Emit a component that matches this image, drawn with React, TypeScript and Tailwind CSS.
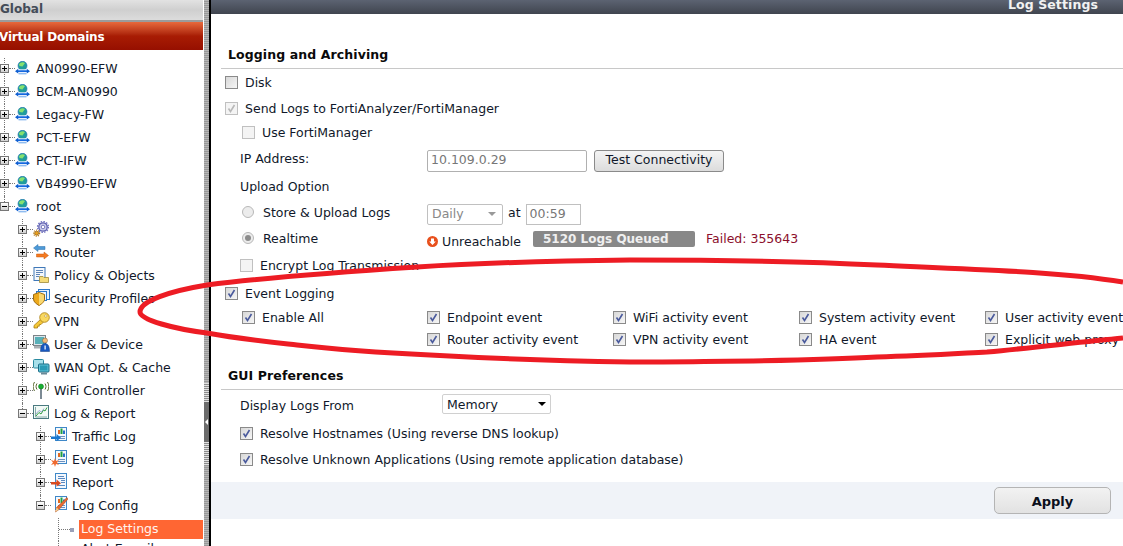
import type { ReactNode } from 'react'

function VdomIcon() {
  return (
    <svg width="15" height="14" viewBox="0 0 15 14">
      <circle cx="7.500" cy="4.800" r="4.500" fill="#1f9c9c" stroke="#1b6fb0" strokeWidth=".6" />
      <path d="M4 3.200C5 1 8.500.6 10 2L7.500 5.500 4.500 5z" fill="#86e070" />
      <rect x="3" y="8.300" width="9" height="1.400" fill="#e8f4ff" />
      <rect x="3" y="9.300" width="9" height="1.800" fill="#1467e0" />
      <path d="M0 10.200 3.200 7.800v4.800zM15 10.200 11.800 7.800v4.800z" fill="#0f5fd0" />
      <rect x="3.500" y="12" width="8" height="1.400" fill="#8fbcf0" />
    </svg>
  )
}

function GearIcon() {
  return (
    <svg width="16" height="16" viewBox="0 0 16 16">
      <circle cx="10" cy="6" r="4.200" fill="#cfd0ee" stroke="#5d5fae" strokeWidth="1.300" />
      <circle cx="10" cy="6" r="5.400" fill="none" stroke="#6d6fc0" strokeWidth="1.400" strokeDasharray="1.500 1.300" />
      <circle cx="10" cy="6" r="1.800" fill="#fff" stroke="#5d5fae" strokeWidth=".8" />
      <circle cx="3.600" cy="12.200" r="2" fill="#e8a020" stroke="#8a5a10" strokeWidth=".7" />
      <circle cx="3.600" cy="12.200" r="3" fill="none" stroke="#b87a15" strokeWidth="1.200" strokeDasharray="1.100 1.100" />
    </svg>
  )
}

function RouterIcon() {
  return (
    <svg width="16" height="16" viewBox="0 0 16 16">
      <path d="M0.500 4 5 .5V2.500H12V5.500H5V7.500z" fill="#4d9ad8" stroke="#2a6ea8" strokeWidth=".5" />
      <path d="M15.500 11.500 11 8V10H3.500V13H11V15z" fill="#f47a20" stroke="#c85a10" strokeWidth=".5" />
    </svg>
  )
}

function PolicyIcon() {
  return (
    <svg width="16" height="16" viewBox="0 0 16 16">
      <rect x="1" y="0.500" width="11" height="13" fill="#f4f8fd" stroke="#3f78b8" />
      <path d="M3 3.500H10M3 5.500H10M3 7.500H7M3 9.500H6" stroke="#5f86b8" />
      <path d="M6.500 9.500H10L11 10.500H15.500V15.500H6.500z" fill="#f5dc78" stroke="#a08a3a" strokeWidth=".8" />
    </svg>
  )
}

function ShieldIcon() {
  return (
    <svg width="17" height="17" viewBox="0 0 17 17">
      <rect x="5.500" y="0.500" width="11" height="10" fill="#e6f0fb" stroke="#2c78c8" />
      <rect x="3.500" y="2.500" width="10" height="9" fill="#eef5fc" stroke="#2c78c8" />
      <path d="M0.500 5.500 6 3.500 11.500 5.500V10C11.500 13 8.500 15 6 16.500 3.500 15 .5 13 .5 10z" fill="#eda91c" stroke="#9c6a10" />
      <path d="M6 4V16C8.500 14.500 11 13 11 10V6z" fill="#f9d870" />
    </svg>
  )
}

function KeyIcon() {
  return (
    <svg width="17" height="17" viewBox="0 0 17 17">
      <path d="M8 7 1 13.500V16H4.500V14.200H6.300V12.500H8L10 10.500z" fill="#f5c838" stroke="#a87c12" strokeWidth=".8" />
      <circle cx="11.500" cy="5.500" r="4.800" fill="#f9d860" stroke="#a87c12" strokeWidth=".8" />
      <circle cx="12.800" cy="4" r="1.200" fill="#fff" stroke="#a87c12" strokeWidth=".5" />
    </svg>
  )
}

function UserIcon() {
  return (
    <svg width="17" height="17" viewBox="0 0 17 17">
      <rect x="0.500" y="0.500" width="12" height="10" fill="#dce6ec" stroke="#7c8488" />
      <rect x="2" y="2" width="9" height="7" fill="#58b0b8" />
      <rect x="1" y="11" width="10" height="2.500" fill="#a8aeb2" />
      <circle cx="12" cy="5.500" r="2.500" fill="#f0b878" stroke="#7a5a30" strokeWidth=".5" />
      <path d="M7.500 16.500C7.500 10.500 9.500 8.500 12 8.500S16.500 10.500 16.500 16.500z" fill="#1858c0" stroke="#0c3880" strokeWidth=".5" />
      <rect x="11.500" y="10.500" width="1.200" height="4" fill="#fff" />
    </svg>
  )
}

function WanIcon() {
  return (
    <svg width="17" height="16" viewBox="0 0 17 16">
      <rect x="0.500" y="0.500" width="10" height="8.500" rx="1" fill="#a8e0ea" stroke="#2a8aa0" />
      <rect x="5.500" y="5" width="10.500" height="8" rx="1" fill="#60c4d8" stroke="#1a6a84" />
      <rect x="7" y="6.500" width="7.500" height="5" fill="#2a9ab4" />
      <rect x="8" y="13.500" width="6" height="2" fill="#6a8a98" />
    </svg>
  )
}

function WifiIcon() {
  return (
    <svg width="16" height="18" viewBox="0 0 16 18" fill="none">
      <rect x="7" y="7" width="2" height="11" fill="#7c8a94" />
      <circle cx="8" cy="5.500" r="2.500" fill="#18b030" stroke="#0a7018" strokeWidth=".5" />
      <path d="M4 2.500C2.700 4.500 2.700 6.500 4 8.500M12 2.500C13.300 4.500 13.300 6.500 12 8.500M1.500 1C-.3 4-.3 7 1.500 10M14.500 1C16.300 4 16.300 7 14.500 10" stroke="#5a6a30" />
    </svg>
  )
}

function ChartIcon() {
  return (
    <svg width="16" height="15" viewBox="0 0 16 15" fill="none">
      <rect x="0.500" y="0.500" width="15" height="13" fill="#f2faf6" stroke="#4a7a80" />
      <path d="M2.500 2V12H14" stroke="#8aa" />
      <path d="M3 11 6 7.500 8 9 10.500 5 12 6 14 2.500" stroke="#30a040" />
      <path d="M3 9 6 5.500 8.500 7 11 3.500" stroke="#7a8ac0" strokeWidth=".7" />
    </svg>
  )
}

function DocBars({ children }: { children: ReactNode }) {
  return (
    <svg width="17" height="17" viewBox="0 0 17 17">
      <rect x="4.500" y="0.500" width="11" height="13" fill="#f4f8fd" stroke="#3f88c8" />
      <rect x="7" y="3" width="2" height="4" fill="#e06a20" />
      <rect x="9.500" y="1.500" width="2" height="5.500" fill="#20a040" />
      <rect x="12" y="3.500" width="2" height="3.500" fill="#2a70c8" />
      <path d="M7 9.500H14M7 11.500H14" stroke="#6a90c0" />
      {children}
    </svg>
  )
}

function TrafficIcon() {
  return (
    <DocBars>
      <path d="M0 9.500H5.500V7L10 10.700 5.500 14.300V12H0z" fill="#1a78d0" />
    </DocBars>
  )
}

function EventIcon() {
  return (
    <DocBars>
      <path d="M4 8 5 11 8 10 6 12.500 8 15 5 14 4 17 3 14 0 15 2 12.500 0 10 3 11z" fill="#f06a30" />
    </DocBars>
  )
}

function ReportIcon() {
  return (
    <svg width="17" height="17" viewBox="0 0 17 17">
      <rect x="4.500" y="0.500" width="11" height="15" fill="#f4f8fd" stroke="#3f88c8" />
      <path d="M7 3.500H13M7 5.500H14M10 7.500H14M10 9.500H14M7 12.500H14" stroke="#5a88c0" />
      <path d="M0 9H5.500V6.500L10 10.200 5.500 13.800V11.500H0z" fill="#d84a20" />
    </svg>
  )
}

function ConfigIcon() {
  return (
    <DocBars>
      <path d="M16 1.500 17 3 8 13.500 4.500 16 5.500 11.500z" fill="#e86a30" stroke="#a04018" strokeWidth=".5" />
      <path d="M5.500 11.500 7.800 13.500 4.500 16z" fill="#f0d090" />
    </DocBars>
  )
}

type Node = {
  label: string
  depth: number
  icon: ReactNode
  open?: boolean
  // last child of its parent: the guide line stops at this row
  last?: boolean
}

const vdoms = ['AN0990-EFW', 'BCM-AN0990', 'Legacy-FW', 'PCT-EFW', 'PCT-IFW', 'VB4990-EFW']

const tree: Node[] = [
  ...vdoms.map((label) => ({ label, depth: 0, icon: <VdomIcon /> })),
  { label: 'root', depth: 0, icon: <VdomIcon />, open: true, last: true },
  { label: 'System', depth: 1, icon: <GearIcon /> },
  { label: 'Router', depth: 1, icon: <RouterIcon /> },
  { label: 'Policy & Objects', depth: 1, icon: <PolicyIcon /> },
  { label: 'Security Profiles', depth: 1, icon: <ShieldIcon /> },
  { label: 'VPN', depth: 1, icon: <KeyIcon /> },
  { label: 'User & Device', depth: 1, icon: <UserIcon /> },
  { label: 'WAN Opt. & Cache', depth: 1, icon: <WanIcon /> },
  { label: 'WiFi Controller', depth: 1, icon: <WifiIcon /> },
  { label: 'Log & Report', depth: 1, icon: <ChartIcon />, open: true, last: true },
  { label: 'Traffic Log', depth: 2, icon: <TrafficIcon /> },
  { label: 'Event Log', depth: 2, icon: <EventIcon /> },
  { label: 'Report', depth: 2, icon: <ReportIcon /> },
  { label: 'Log Config', depth: 2, icon: <ConfigIcon />, open: true, last: true },
]

function Expander({ open, last }: { open?: boolean; last?: boolean }) {
  return (
    <div className="relative w-[15px] self-stretch shrink-0">
      <span className={`absolute left-[4px] top-0 border-l border-dotted border-[#777] ${last ? 'h-[10px]' : 'bottom-0'}`} />
      <span className="absolute left-[9px] top-[10px] w-[6px] border-t border-dotted border-[#777]" />
      <span className="absolute left-0 top-[6px] w-[9px] h-[9px] border border-[#777] bg-gradient-to-b from-white to-[#d0d0d0]">
        <span className="absolute left-[1px] top-[3px] w-[5px] h-px bg-black" />
        {!open && <span className="absolute left-[3px] top-[1px] w-px h-[5px] bg-black" />}
      </span>
    </div>
  )
}

function TreeRow({ node }: { node: Node }) {
  return (
    <div className="h-[23px] flex items-center">
      {Array.from({ length: node.depth }).map((_, i) => (
        <div key={i} className="w-[18px] shrink-0" />
      ))}
      <Expander open={node.open} last={node.last} />
      <div className="w-[21px] shrink-0 -mt-[4px] flex">{node.icon}</div>
      <span className="whitespace-nowrap text-[#10182a]">{node.label}</span>
    </div>
  )
}

function Sidebar() {
  return (
    <div className="w-[204px] shrink-0 h-full overflow-hidden bg-white pr-px text-[12.5px]">
      <div className="h-[22px] overflow-hidden bg-gradient-to-b from-[#e2e2e2] via-[#cfcfcf] to-[#dcdcdc] border-b-2 border-[#9c9c9c]">
        <div className="text-[12px] font-bold text-[#444c58] leading-[18px]">Global</div>
      </div>
      <div className="h-[28px] pt-[2px] flex items-center bg-gradient-to-b from-[#e8693c] via-[#a81c04] to-[#960f00]">
        <span className="-ml-px text-[12px] tracking-[-0.2px] font-bold text-white">Virtual Domains</span>
      </div>
      <div className="pt-[8px]">
        {tree.map((node) => (
          <TreeRow key={node.label} node={node} />
        ))}
        <div className="h-[23px] pl-[58px] flex items-center">
          <div className="relative w-[12px] self-stretch shrink-0 border-l border-dotted border-[#777]">
            <span className="absolute left-0 top-[11px] w-[11px] border-t border-dotted border-[#777]" />
          </div>
          <span className="w-[4px] h-[4px] shrink-0 bg-[#9aa0b8]" />
          <span className="ml-[5px] flex-1 h-[19px] pl-[2px] flex items-center bg-[#ff6633] text-[#fff4ee]">Log Settings</span>
        </div>
        <div className="h-[23px] pl-[58px] flex items-start">
          <div className="w-[23px] self-stretch shrink-0 border-l border-dotted border-[#777]" />
          <span className="-mt-[1px] whitespace-nowrap text-[#10182a]">Alert E-mail</span>
        </div>
      </div>
    </div>
  )
}

function Checkbox({ checked, disabled, faint }: { checked?: boolean; disabled?: boolean; faint?: boolean }) {
  return (
    <span
      className={`w-[13px] h-[13px] shrink-0 flex items-center justify-center border ${
        disabled || faint
          ? 'border-[#c0c0c0] bg-[#f4f4f4]'
          : 'border-[#8a8a8a] bg-gradient-to-br from-[#d8d8d8] to-[#f6f6f6]'
      }`}
    >
      {checked && (
        <svg width="9" height="9" viewBox="0 0 9 9" fill="none">
          <path d="M1.500 4.500 3.500 7.500 7.500 1" stroke={disabled ? '#b8b8b8' : '#4a5a9c'} strokeWidth="1.600" />
        </svg>
      )}
    </span>
  )
}

function Radio({ selected }: { selected?: boolean }) {
  return (
    <span className="w-[12px] h-[12px] shrink-0 rounded-full border border-[#b8b8b8] bg-[#ececec] flex items-center justify-center">
      {selected && <span className="w-[6px] h-[6px] rounded-full bg-[#8c8c8c]" />}
    </span>
  )
}

// row text sits a pixel under the box it belongs to
function Label({ children, className }: { children: ReactNode; className?: string }) {
  return <span className={`pt-[2px] whitespace-nowrap ${className ?? ''}`}>{children}</span>
}

function EventCell({ label }: { label: string }) {
  return (
    <div className="w-[186px] shrink-0 flex items-center gap-[7px]">
      <Checkbox checked />
      <Label>{label}</Label>
    </div>
  )
}

function SectionTitle({ children, className }: { children: ReactNode; className: string }) {
  return (
    <div className={`flex items-center border-b border-[#c8c8c8] pl-[7px] pt-[2px] font-bold text-[12.5px] tracking-[0.1px] text-[#0a0a0a] ${className}`}>
      {children}
    </div>
  )
}

function SettingsForm() {
  return (
    <div className="pl-[10px] text-[12.5px] text-[#10182a]">
      <SectionTitle className="mt-[27px] h-[28px]">Logging and Archiving</SectionTitle>

      <div className="h-[26px] pl-[4px] flex items-center gap-[7px]">
        <Checkbox />
        <Label>Disk</Label>
      </div>
      <div className="h-[26px] pl-[4px] flex items-center gap-[7px]">
        <Checkbox checked disabled />
        <Label>Send Logs to FortiAnalyzer/FortiManager</Label>
      </div>
      <div className="h-[22px] pl-[21px] flex items-center gap-[7px]">
        <Checkbox faint />
        <Label>Use FortiManager</Label>
      </div>
      <div className="h-[30px] pl-[19px] flex items-center">
        <Label className="w-[187px] shrink-0">IP Address:</Label>
        <div className="mt-[5px] w-[160px] h-[22px] px-[3px] flex items-center border border-[#b0b0b0] rounded-[2px] text-[#777]">10.109.0.29</div>
        <div className="mt-[5px] ml-[7px] w-[130px] h-[22px] flex items-center justify-center border border-[#8a8a8a] rounded-[3px] bg-gradient-to-b from-[#f4f4f4] to-[#dcdcdc]">
          Test Connectivity
        </div>
      </div>
      <div className="h-[26px] pl-[19px] flex items-center">
        <Label>Upload Option</Label>
      </div>
      <div className="h-[26px] pl-[21px] flex items-center">
        <Radio />
        <Label className="ml-[9px] w-[164px] shrink-0">Store &amp; Upload Logs</Label>
        <div className="mt-[4px] w-[76px] h-[21px] pl-[4px] pr-[6px] flex items-center justify-between border border-[#c0c0c0] rounded-[2px] text-[#888]">
          Daily
          <span className="border-x-[4px] border-t-[4px] border-x-transparent border-t-[#999]" />
        </div>
        <Label className="ml-[5px]">at</Label>
        <div className="mt-[4px] ml-[5px] w-[55px] h-[21px] px-[3px] flex items-center border border-[#c0c0c0] text-[#777]">00:59</div>
      </div>
      <div className="h-[26px] pl-[21px] flex items-center">
        <Radio selected />
        <Label className="ml-[9px] w-[164px] shrink-0">Realtime</Label>
        <div className="w-[106px] shrink-0 flex items-center gap-[4px] mt-[6px]">
          <svg width="11" height="11" viewBox="0 0 11 11">
            <circle cx="5.500" cy="5.500" r="5.500" fill="#e8501c" />
            <path d="M4 2.500H7V5.500H8.800L5.500 9 2.200 5.500H4z" fill="#fff" />
          </svg>
          <Label>Unreachable</Label>
        </div>
        <div className="w-[162px] h-[16px] pl-[10px] mt-[1px] flex items-center rounded-[2px] bg-[#888888] text-[12px] font-bold text-[#f0f0f0]">5120 Logs Queued</div>
        <Label className="ml-[11px] text-[#8c0f2c]">Failed: 355643</Label>
      </div>
      <div className="h-[28px] pl-[19px] flex items-center gap-[7px]">
        <Checkbox faint />
        <Label>Encrypt Log Transmission</Label>
      </div>
      <div className="h-[27px] pl-[4px] pt-px flex items-center gap-[7px]">
        <Checkbox checked />
        <Label>Event Logging</Label>
      </div>
      <div className="h-[22px] pl-[21px] flex items-center">
        <div className="w-[185px] shrink-0 flex items-center gap-[7px]">
          <Checkbox checked />
          <Label>Enable All</Label>
        </div>
        <EventCell label="Endpoint event" />
        <EventCell label="WiFi activity event" />
        <EventCell label="System activity event" />
        <EventCell label="User activity event" />
      </div>
      <div className="h-[22px] pl-[206px] flex items-center">
        <EventCell label="Router activity event" />
        <EventCell label="VPN activity event" />
        <EventCell label="HA event" />
        <EventCell label="Explicit web proxy" />
      </div>

      <SectionTitle className="mt-[11px] h-[29px]">GUI Preferences</SectionTitle>

      <div className="h-[30px] pl-[19px] flex items-center">
        <Label className="w-[202px] shrink-0">Display Logs From</Label>
        <div className="w-[109px] h-[20px] pl-[4px] pr-[4px] -mt-[2px] flex items-center justify-between border border-[#d0d0d0] rounded-[2px]">
          <Label>Memory</Label>
          <span className="border-x-[4px] border-t-[4px] border-x-transparent border-t-black" />
        </div>
      </div>
      <div className="h-[26px] pl-[19px] flex items-center gap-[7px]">
        <Checkbox checked />
        <Label>Resolve Hostnames (Using reverse DNS lookup)</Label>
      </div>
      <div className="h-[26px] pl-[19px] flex items-center gap-[7px]">
        <Checkbox checked />
        <Label>Resolve Unknown Applications (Using remote application database)</Label>
      </div>
    </div>
  )
}

export default function App() {
  return (
    <div className="relative w-[1123px] h-[546px] flex overflow-hidden bg-white font-['DejaVu_Sans',sans-serif]">
      <Sidebar />

      <div className="w-[7px] shrink-0 h-full flex flex-col border-r-2 border-black bg-[repeating-linear-gradient(180deg,#b6b6b6_0,#b6b6b6_1px,#989898_1px,#989898_2px)]">
        <div className="h-[383px]" />
        <div className="h-[19px] bg-[repeating-linear-gradient(180deg,#e0e0e0_0,#e0e0e0_1px,#8c8c8c_1px,#8c8c8c_2px)]" />
        <div className="h-[40px] flex items-center justify-center bg-[#6c6c6c]">
          <span className="border-y-[3px] border-r-[3px] border-y-transparent border-r-white" />
        </div>
        <div className="h-[23px] bg-[repeating-linear-gradient(180deg,#e0e0e0_0,#e0e0e0_1px,#8c8c8c_1px,#8c8c8c_2px)]" />
      </div>

      <div className="flex-1 min-w-0 h-full flex flex-col">
        <div className="h-[14px] shrink-0 overflow-hidden pr-[25px] text-right bg-gradient-to-b from-[#5c6372] to-[#40454f]">
          <span className="relative -top-[2px] block text-[12.5px] tracking-[0.1px] leading-[14px] font-bold text-[#f2f2f2]">Log Settings</span>
        </div>
        <SettingsForm />
        <div className="mt-[10px] h-[37px] flex items-center justify-end pr-[12px] bg-[#f0f3f8]">
          <div className="w-[117px] h-[27px] pt-[2px] flex items-center justify-center border border-[#b4b4b4] rounded-[5px] bg-gradient-to-b from-[#f2f2f2] to-[#e2e2e2] text-[13px] font-bold text-[#0a0f1c]">
            Apply
          </div>
        </div>
      </div>

      {/* hand-drawn marker ring on top of the screenshot */}
      <svg className="absolute inset-0 pointer-events-none" width="1123" height="546" viewBox="0 0 1123 546" fill="none">
        <path
          d="M1123 282C1060 272 990 270 877 265 800 261 700 260 630 260 540 261 480 263 417 267 340 272 270 277 207 285 170 291 140 301 140 312 140 320 175 329 207 333 240 339 270 342 297 345 340 350 385 353 430 355 500 359 570 361 630 362 680 362 720 361 753 361 800 360 840 359 877 357 920 356 950 354 987 352 1040 347 1080 342 1123 338"
          stroke="#ed1c24"
          strokeWidth="5"
        />
      </svg>
    </div>
  )
}
